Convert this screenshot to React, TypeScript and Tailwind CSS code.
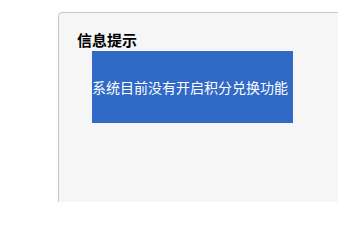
export default function App() {
  return (
    <div className="h-[202px] w-[338px] overflow-hidden bg-white font-['Noto_Sans_CJK_SC',sans-serif]">
      <div className="ml-[58px] mt-[12px] h-[260px] w-[320px] rounded-tl-[4px] border border-[#c6c6c6] bg-[#f6f6f6] pl-[18px] pt-[19px]">
        <h3 className="text-[15px] font-bold leading-[15px] text-black">信息提示</h3>
        <div className="ml-[15px] mt-[4px] flex h-[72px] w-[201px] items-center bg-[#3169c6] text-[14px] leading-[16px] text-white">
          系统目前没有开启积分兑换功能
        </div>
      </div>
    </div>
  );
}
